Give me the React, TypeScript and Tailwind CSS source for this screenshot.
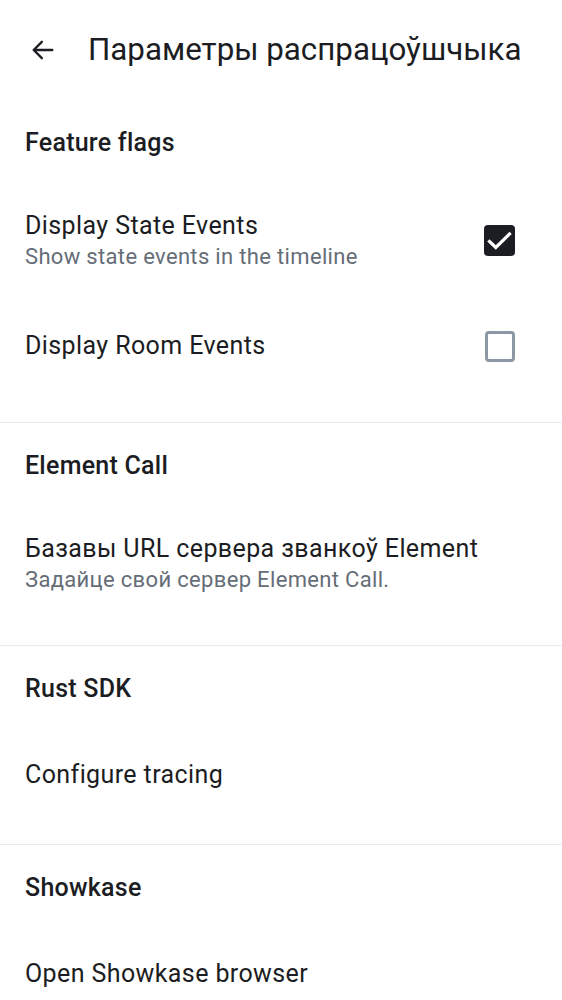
import { ReactNode } from 'react'

const font = { fontFamily: 'Roboto, "Noto Sans", sans-serif' }

function SectionHeader({ title }: { title: string }) {
  return (
    <div className="h-[86px] flex items-center px-[25px]">
      <span className="text-[25px] font-medium text-[#1b1d22] tracking-[0.25px]">{title}</span>
    </div>
  )
}

function Row({
  title,
  subtitle,
  height,
  trailing,
}: {
  title: string
  subtitle?: string
  height: string
  trailing?: ReactNode
}) {
  return (
    <div className={`${height} flex items-center pl-[25px] pr-[47px]`}>
      <div className="flex-1 flex flex-col">
        <span className="text-[25px] leading-[32px] text-[#1b1d22] tracking-[0.4px]">{title}</span>
        {subtitle && (
          <span className="text-[22px] leading-[30px] text-[#656d77] tracking-[0.33px]">{subtitle}</span>
        )}
      </div>
      {trailing}
    </div>
  )
}

function Checkbox({ checked }: { checked: boolean }) {
  if (checked) {
    return (
      <div className="w-[31px] h-[31px] -mt-[2px] rounded-[4px] bg-[#1b1d22]">
        <svg width="31" height="31" viewBox="0 0 31 31" fill="none">
          <path d="M5.5 16.5l6.3 6L25.5 9" stroke="white" strokeWidth="3.2" strokeLinecap="square" />
        </svg>
      </div>
    )
  }
  return <div className="w-[30px] h-[31px] rounded-[4px] border-[3px] border-[#8d97a5]" />
}

export default function App() {
  return (
    <div className="w-[562px] h-[1000px] bg-white overflow-hidden" style={font}>
      {/* Top app bar */}
      <div className="h-[100px] flex items-center">
        <div className="w-[88px] flex items-center pl-[29px]">
          <svg width="28" height="28" viewBox="0 0 24 24" fill="none">
            <path d="M20 12H4.5M11 5l-7 7 7 7" stroke="#1b1d22" strokeWidth="2" strokeLinecap="round" strokeLinejoin="round" />
          </svg>
        </div>
        <span className="text-[31.3px] text-[#1b1d22]">Параметры распрацоўшчыка</span>
      </div>

      <SectionHeader title="Feature flags" />
      <Row
        title="Display State Events"
        subtitle="Show state events in the timeline"
        height="h-[110px]"
        trailing={<Checkbox checked />}
      />
      <Row title="Display Room Events" height="h-[100px]" trailing={<Checkbox checked={false} />} />
      <div className="h-[26px]" />
      <div className="h-px bg-[#ebebed]" />

      <SectionHeader title="Element Call" />
      <Row
        title="Базавы URL сервера званкоў Element"
        subtitle="Задайце свой сервер Element Call."
        height="h-[110px]"
      />
      <div className="h-[26px]" />
      <div className="h-px bg-[#ebebed]" />

      <SectionHeader title="Rust SDK" />
      <Row title="Configure tracing" height="h-[86px]" />
      <div className="h-[26px]" />
      <div className="h-px bg-[#ebebed]" />

      <SectionHeader title="Showkase" />
      <Row title="Open Showkase browser" height="h-[86px]" />
    </div>
  )
}
